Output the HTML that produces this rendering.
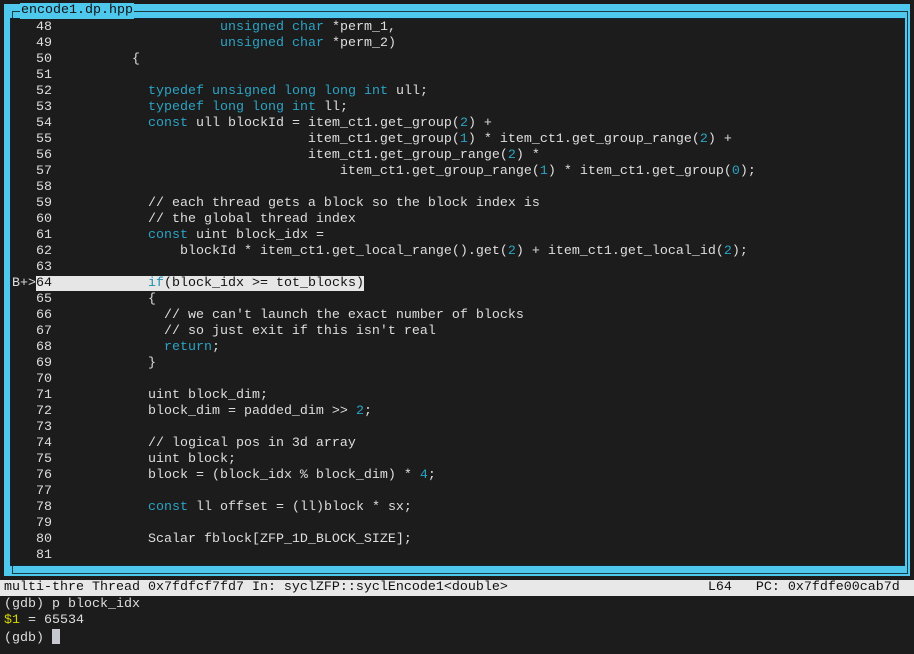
<!DOCTYPE html>
<html><head><meta charset="utf-8"><style>
html,body{margin:0;padding:0;background:#1c1c1c;width:914px;height:654px;overflow:hidden}
.box{position:absolute;left:4px;top:4px;width:906px;height:572px;background:#4ec9ed}
.ln{position:absolute;left:8px;top:7px;width:896px;height:563px;border:1px solid #1a3a44;box-sizing:border-box}
.inner{position:absolute;left:10px;top:18px;width:895px;height:548px;background:#1c1c1c;border:1px solid #123;box-sizing:border-box}
pre{margin:0;position:absolute;font-family:"Liberation Mono","DejaVu Sans Mono",monospace;font-size:13.33px;line-height:16px;color:#dedede;white-space:pre}
.k{color:#2ba3c4}
.y{color:#d7d700}
.t{position:absolute;left:20px;top:3px;background:#4ec9ed;color:#111;padding:0 1px}
.hl{background:#e6e6e6;color:#111}
.hl .k{color:#1f8fb0}
.status{position:absolute;left:0;top:580px;width:914px;height:16px;background:#e8e8e8}
.cur{display:inline-block;width:8px;height:15px;background:#c8c8d0;vertical-align:-3px}
</style></head><body>
<div class="box"><div class="ln"></div></div>
<div class="inner"></div>
<pre class="t">encode1.dp.hpp</pre>
<pre style="left:12px;top:20px">   48                     <span class="k">unsigned</span> <span class="k">char</span> *perm_1,
   49                     <span class="k">unsigned</span> <span class="k">char</span> *perm_2)
   50          {
   51
   52            <span class="k">typedef</span> <span class="k">unsigned</span> <span class="k">long</span> <span class="k">long</span> <span class="k">int</span> ull;
   53            <span class="k">typedef</span> <span class="k">long</span> <span class="k">long</span> <span class="k">int</span> ll;
   54            <span class="k">const</span> ull blockId = item_ct1.get_group(<span class="k">2</span>) +
   55                                item_ct1.get_group(<span class="k">1</span>) * item_ct1.get_group_range(<span class="k">2</span>) +
   56                                item_ct1.get_group_range(<span class="k">2</span>) *
   57                                    item_ct1.get_group_range(<span class="k">1</span>) * item_ct1.get_group(<span class="k">0</span>);
   58
   59            // each thread gets a block so the block index is
   60            // the global thread index
   61            <span class="k">const</span> uint block_idx =
   62                blockId * item_ct1.get_local_range().get(<span class="k">2</span>) + item_ct1.get_local_id(<span class="k">2</span>);
   63
B+><span class="hl">64            <span class="k">if</span>(block_idx &gt;= tot_blocks)</span>
   65            {
   66              // we can't launch the exact number of blocks
   67              // so just exit if this isn't real
   68              <span class="k">return</span>;
   69            }
   70
   71            uint block_dim;
   72            block_dim = padded_dim &gt;&gt; <span class="k">2</span>;
   73
   74            // logical pos in 3d array
   75            uint block;
   76            block = (block_idx % block_dim) * <span class="k">4</span>;
   77
   78            <span class="k">const</span> ll offset = (ll)block * sx;
   79
   80            Scalar fblock[ZFP_1D_BLOCK_SIZE];
   81</pre>
<div class="status"></div>
<pre style="left:4px;top:580px;color:#111">multi-thre Thread 0x7fdfcf7fd7 In: syclZFP::syclEncode1&lt;double&gt;                         L64   PC: 0x7fdfe00cab7d</pre>
<pre style="left:4px;top:597px">(gdb) p block_idx
<span class="y">$1</span> = 65534
(gdb) <span class="cur"></span></pre>
</body></html>
